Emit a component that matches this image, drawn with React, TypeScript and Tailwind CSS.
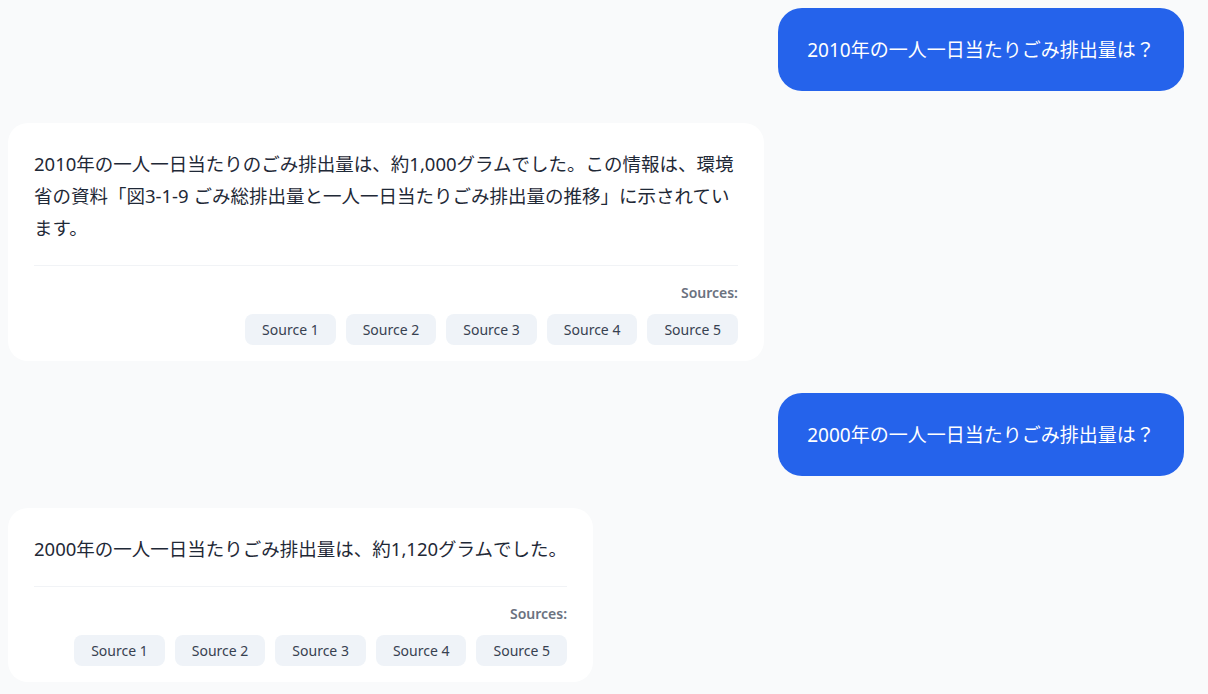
import React from 'react';

interface Message {
    role: 'user' | 'assistant';
    text: string;
    sources?: string[];
}

const SOURCES = ['Source 1', 'Source 2', 'Source 3', 'Source 4', 'Source 5'];

const MESSAGES: Message[] = [
    { role: 'user', text: '2010年の一人一日当たりごみ排出量は？' },
    {
        role: 'assistant',
        text: '2010年の一人一日当たりのごみ排出量は、約1,000グラムでした。この情報は、環境省の資料「図3-1-9 ごみ総排出量と一人一日当たりごみ排出量の推移」に示されています。',
        sources: SOURCES,
    },
    { role: 'user', text: '2000年の一人一日当たりごみ排出量は？' },
    {
        role: 'assistant',
        text: '2000年の一人一日当たりごみ排出量は、約1,120グラムでした。',
        sources: SOURCES,
    },
];

function UserBubble({ text }: { text: string }) {
    return (
        <div className="self-end mr-4 w-[406px] h-[83px] flex items-center justify-center rounded-[24px] bg-[#2563eb] text-white text-[19px] leading-7">
            {text}
        </div>
    );
}

function AssistantBubble({ text, sources }: { text: string; sources?: string[] }) {
    return (
        <div className="self-start max-w-[756px] rounded-[20px] bg-white px-[26px] pt-[25px] pb-[16px]">
            <p className="text-[18.5px] leading-8 text-[#1f2937]">{text}</p>
            {sources && (
                <div className="mt-[21px] border-t border-[#f1f3f6] pt-[17px]">
                    <div className="text-right text-[14px] leading-5 font-semibold text-[#6b7280]">Sources:</div>
                    <div className="mt-[11px] flex justify-end gap-[10px]">
                        {sources.map((s) => (
                            <span
                                key={s}
                                className="h-[31px] px-[17px] flex items-center rounded-lg bg-[#eff3f8] text-[14px] text-[#374151]"
                            >
                                {s}
                            </span>
                        ))}
                    </div>
                </div>
            )}
        </div>
    );
}

export default function App() {
    return (
        <div
            className="min-h-[694px] bg-[#f9fafb] px-2 pt-2 flex flex-col gap-8"
            style={{ fontFamily: '"Noto Sans", "Noto Sans CJK JP", sans-serif' }}
        >
            {MESSAGES.map((m, i) =>
                m.role === 'user' ? (
                    <UserBubble key={i} text={m.text} />
                ) : (
                    <AssistantBubble key={i} text={m.text} sources={m.sources} />
                )
            )}
        </div>
    );
}
